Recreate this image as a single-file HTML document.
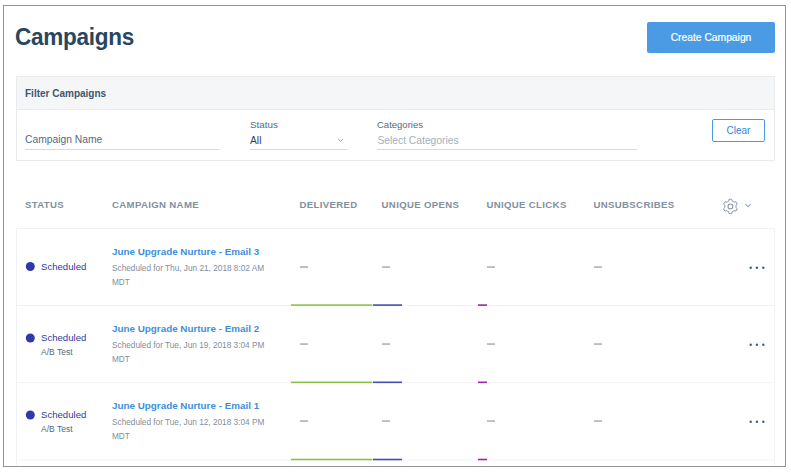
<!DOCTYPE html>
<html><head><meta charset="utf-8">
<style>
*{box-sizing:border-box;margin:0;padding:0}
html,body{width:791px;height:473px;background:#fff;overflow:hidden}
body{font-family:"Liberation Sans",sans-serif;color:#294661;position:relative}
.abs{position:absolute;white-space:nowrap}
#frame{left:3px;top:5px;width:783px;height:462px;border:1px solid #939393}
#title{left:15.3px;top:22px;font-size:23.4px;font-weight:bold;line-height:30px;color:#294661;letter-spacing:-0.3px;transform:translateY(0.45px) scaleX(0.964);transform-origin:0 0}
#create{left:647px;top:22px;width:128px;height:31px;background:#4a9be4;border-radius:2px;color:#fff;font-size:10.3px;line-height:31px;text-align:center;-webkit-text-stroke:0.2px #fff}
#filter{left:16px;top:76px;width:759px;height:85px;border:1px solid #e9ecef;background:#fff}
#fhead{left:17px;top:77px;width:757px;height:33px;background:#f4f6f7;border-bottom:1px solid #e9ecef}
.lbl{font-size:9.6px;line-height:12px;color:#546b81}
.val{font-size:10.3px;line-height:14px;color:#546b81}
.ul{height:1px;background:#d4dadf}
#clear{left:712px;top:119px;width:53px;height:23px;border:1px solid #4a9be4;border-radius:2px;color:#2d87dc;font-size:10px;line-height:22px;text-align:center;background:#fff}
.th{font-size:9.6px;line-height:12px;font-weight:bold;letter-spacing:0.35px;color:#7f90a0;top:199px}
#tbody{left:16px;top:228px;width:759px;height:237px;border:1px solid #f0f2f5;border-bottom:none}
.name{font-size:9.85px;font-weight:bold;color:#3d8fdd;line-height:12px;left:112px}
.sub{font-size:8.25px;color:#828e9a;line-height:14px;left:112px}
.st{font-size:9.6px;color:#2f3a9e;line-height:12px;left:41px}
.st2{font-size:8.5px;color:#546b81;line-height:12px;left:41px}
svg#ov{left:0;top:0}
</style></head><body>
<div class="abs" id="frame"></div>
<div class="abs" id="title">Campaigns</div>
<div class="abs" id="create">Create Campaign</div>
<div class="abs" id="filter"></div>
<div class="abs" id="fhead"></div>
<div class="abs" style="left:25px;top:87.5px;font-size:10px;font-weight:bold;line-height:12px;color:#3f566e">Filter Campaigns</div>
<div class="abs val" style="left:25px;top:133px">Campaign Name</div>
<div class="abs ul" style="left:25px;top:149px;width:194px"></div>
<div class="abs lbl" style="left:250px;top:118.5px;font-size:9.9px">Status</div>
<div class="abs val" style="left:250px;top:134px;color:#294661;font-size:10.3px">All</div>
<div class="abs ul" style="left:250px;top:149px;width:97px"></div>
<div class="abs lbl" style="left:377px;top:118.5px;font-size:9.5px">Categories</div>
<div class="abs val" style="left:377.4px;top:134px;color:#9fb0c0;font-size:10.3px">Select Categories</div>
<div class="abs ul" style="left:377px;top:149px;width:260px"></div>
<div class="abs" id="clear">Clear</div>

<div class="abs th" style="left:25px">STATUS</div>
<div class="abs th" style="left:112px">CAMPAIGN NAME</div>
<div class="abs th" style="left:299.4px">DELIVERED</div>
<div class="abs th" style="left:381.6px">UNIQUE OPENS</div>
<div class="abs th" style="left:486.4px">UNIQUE CLICKS</div>
<div class="abs th" style="left:593.5px">UNSUBSCRIBES</div>

<div class="abs" id="tbody"></div>
<!-- row -->
<div class="abs st" style="top:261.0px">Scheduled</div>
<div class="abs name" style="top:245.6px">June Upgrade Nurture - Email 3</div>
<div class="abs sub" style="top:261.5px">Scheduled for Thu, Jun 21, 2018 8:02 AM<br>MDT</div>
<!-- row -->
<div class="abs st" style="top:332.0px">Scheduled</div>
<div class="abs st2" style="top:345.8px">A/B Test</div>
<div class="abs name" style="top:322.6px">June Upgrade Nurture - Email 2</div>
<div class="abs sub" style="top:338.5px">Scheduled for Tue, Jun 19, 2018 3:04 PM<br>MDT</div>
<!-- row -->
<div class="abs st" style="top:409.0px">Scheduled</div>
<div class="abs st2" style="top:422.8px">A/B Test</div>
<div class="abs name" style="top:399.6px">June Upgrade Nurture - Email 1</div>
<div class="abs sub" style="top:415.5px">Scheduled for Tue, Jun 12, 2018 3:04 PM<br>MDT</div>
<svg class="abs" id="ov" width="791" height="473" viewBox="0 0 791 473">
<path d="M728.58 201.11 L729.03 199.33 L730.40 199.20 L731.77 199.33 L732.22 201.11 L733.20 201.55 L734.07 202.17 L735.83 201.68 L736.64 202.80 L737.21 204.06 L735.90 205.33 L736.00 206.40 L735.90 207.47 L737.21 208.74 L736.64 210.00 L735.83 211.12 L734.07 210.63 L733.20 211.25 L732.22 211.69 L731.77 213.47 L730.40 213.60 L729.03 213.47 L728.58 211.69 L727.60 211.25 L726.73 210.63 L724.97 211.12 L724.16 210.00 L723.59 208.74 L724.90 207.47 L724.80 206.40 L724.90 205.33 L723.59 204.06 L724.16 202.80 L724.97 201.68 L726.73 202.17 L727.60 201.55Z" fill="none" stroke="#8393a4" stroke-width="1" stroke-linejoin="round"/>
<circle cx="730.4" cy="206.4" r="2.4" fill="none" stroke="#8595a6" stroke-width="1.05"/>
<path d="M745.5 204.2 L748.1 206.7 L750.7 204.2" fill="none" stroke="#98a6b4" stroke-width="1.05"/>
<path d="M338.2 139 L340.6 141.4 L343 139" fill="none" stroke="#9aa7b4" stroke-width="1"/>
<circle cx="30.3" cy="266.5" r="4.5" fill="#2f3aa8"/>
<rect x="300" y="266.3" width="8" height="1.5" fill="#a9adb2"/>
<rect x="382" y="266.3" width="8" height="1.5" fill="#a9adb2"/>
<rect x="487" y="266.3" width="8" height="1.5" fill="#a9adb2"/>
<rect x="594" y="266.3" width="8" height="1.5" fill="#a9adb2"/>
<circle cx="750.7" cy="267.7" r="1.2" fill="#3f5f80"/>
<circle cx="756.9" cy="267.7" r="1.2" fill="#3f5f80"/>
<circle cx="763.3" cy="267.7" r="1.2" fill="#3f5f80"/>
<rect x="17" y="305.0" width="757" height="1" fill="#f0f2f5"/>
<rect x="291" y="304.3" width="81.3" height="1.6" fill="#8bc34a"/>
<rect x="373" y="304.3" width="29" height="1.6" fill="#3f51b5"/>
<rect x="478" y="304.3" width="9" height="1.6" fill="#9c27b0"/>
<circle cx="30.3" cy="338.0" r="4.5" fill="#2f3aa8"/>
<rect x="300" y="343.3" width="8" height="1.5" fill="#a9adb2"/>
<rect x="382" y="343.3" width="8" height="1.5" fill="#a9adb2"/>
<rect x="487" y="343.3" width="8" height="1.5" fill="#a9adb2"/>
<rect x="594" y="343.3" width="8" height="1.5" fill="#a9adb2"/>
<circle cx="750.7" cy="344.7" r="1.2" fill="#3f5f80"/>
<circle cx="756.9" cy="344.7" r="1.2" fill="#3f5f80"/>
<circle cx="763.3" cy="344.7" r="1.2" fill="#3f5f80"/>
<rect x="17" y="382.2" width="757" height="1" fill="#f0f2f5"/>
<rect x="291" y="381.5" width="81.3" height="1.6" fill="#8bc34a"/>
<rect x="373" y="381.5" width="29" height="1.6" fill="#3f51b5"/>
<rect x="478" y="381.5" width="9" height="1.6" fill="#9c27b0"/>
<circle cx="30.3" cy="415.0" r="4.5" fill="#2f3aa8"/>
<rect x="300" y="420.3" width="8" height="1.5" fill="#a9adb2"/>
<rect x="382" y="420.3" width="8" height="1.5" fill="#a9adb2"/>
<rect x="487" y="420.3" width="8" height="1.5" fill="#a9adb2"/>
<rect x="594" y="420.3" width="8" height="1.5" fill="#a9adb2"/>
<circle cx="750.7" cy="421.7" r="1.2" fill="#3f5f80"/>
<circle cx="756.9" cy="421.7" r="1.2" fill="#3f5f80"/>
<circle cx="763.3" cy="421.7" r="1.2" fill="#3f5f80"/>
<rect x="17" y="459.4" width="757" height="1" fill="#f0f2f5"/>
<rect x="291" y="458.7" width="81.3" height="1.6" fill="#8bc34a"/>
<rect x="373" y="458.7" width="29" height="1.6" fill="#3f51b5"/>
<rect x="478" y="458.7" width="9" height="1.6" fill="#9c27b0"/>
</svg>
</body></html>
